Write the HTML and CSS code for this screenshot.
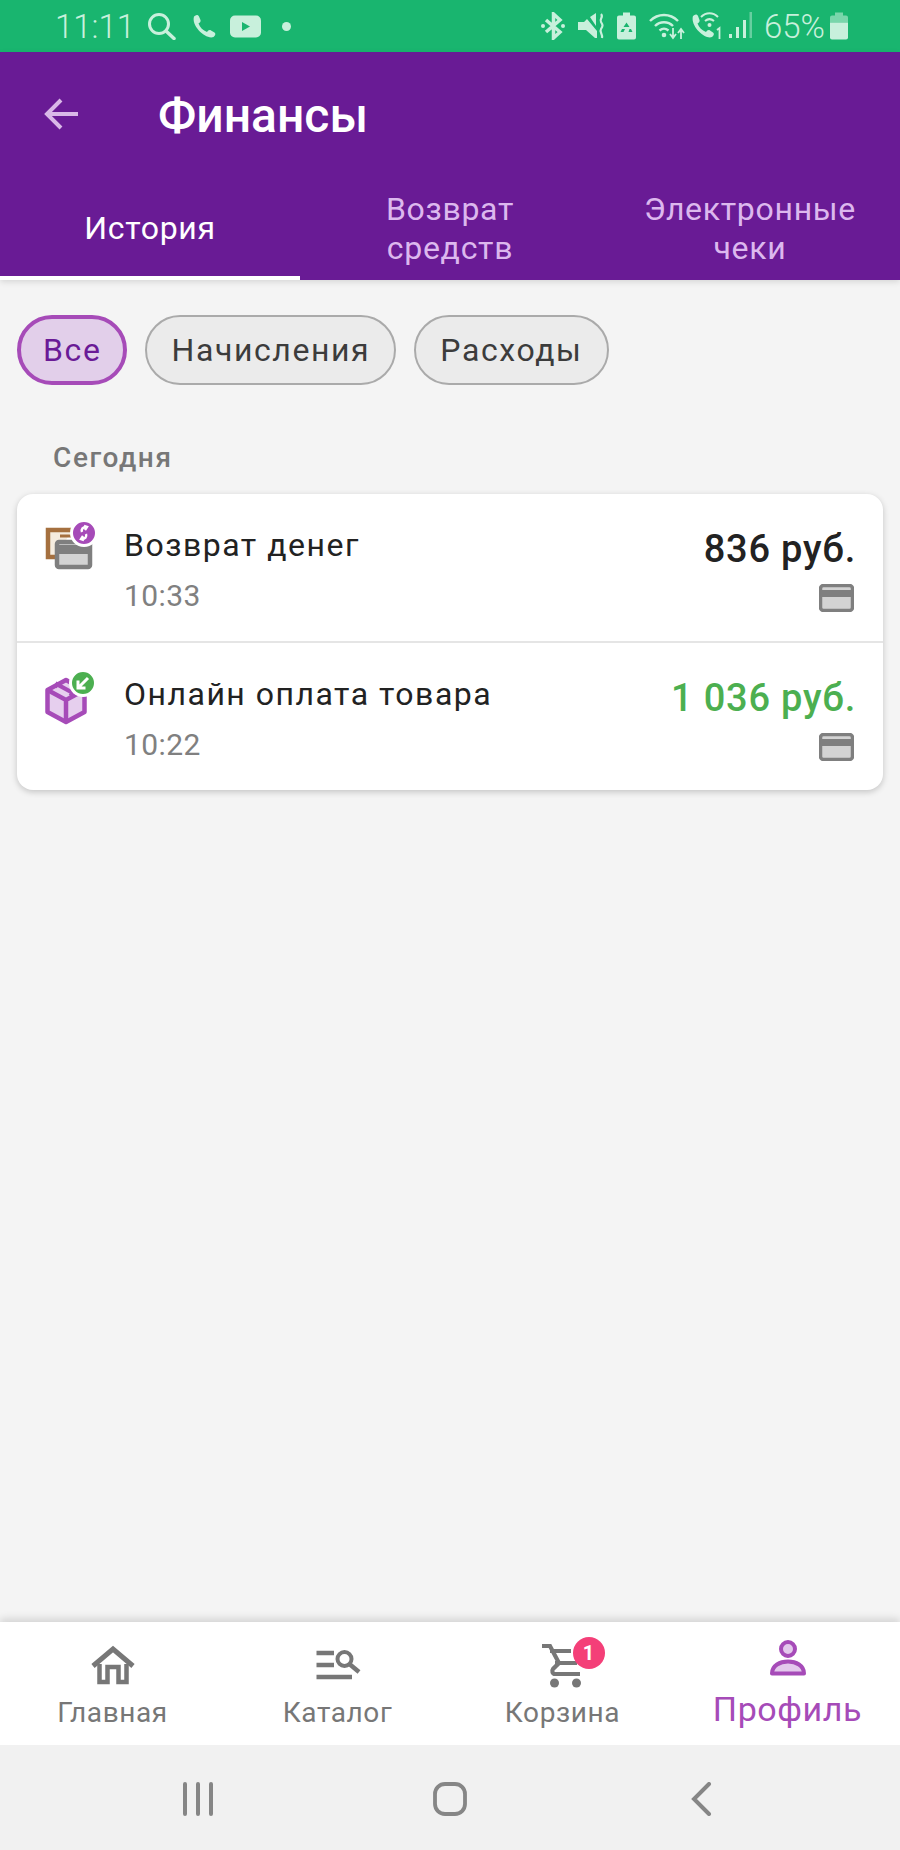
FILE: index.html
```html
<!DOCTYPE html>
<html lang="ru">
<head>
    <meta charset="UTF-8">
    <meta name="viewport" content="width=device-width, initial-scale=1.0">
    <title>Финансы</title>
    <link rel="stylesheet" href="styles.css">
</head>
<body>

<div class="app">
    <!-- Статус-бар -->
    <div class="status-bar">
        <span class="status-time">11:11</span>
        <svg class="st st-search" viewBox="0 0 30 28"><circle cx="12" cy="12" r="9.5" fill="none" stroke="#c8f0dc" stroke-width="3"/><path d="M19 19l8 7.500" stroke="#c8f0dc" stroke-width="3.500" stroke-linecap="round"/></svg>
        <svg class="st st-phone" viewBox="0 0 26 26"><path d="M3 3.500C5 1.500 7 1.500 8 3.500L9.500 7C10 8.500 9 9.500 7.500 10.500C9 14.500 12 17.500 16 19C17 17.500 18.500 16.500 20 17.500L23.500 19.500C25 20.500 24.500 22.500 22.500 24C15 27 0 13 3 3.500Z" fill="#c8f0dc"/></svg>
        <svg class="st st-yt" viewBox="0 0 31 23"><rect width="31" height="22" y="0.500" rx="5" fill="#c8f0dc"/><path d="M12 7l8 4.500-8 4.500z" fill="#19b56f"/></svg>
        <span class="status-dot"></span>
        <div class="status-spacer"></div>
        <svg class="st st-bt" viewBox="0 0 26 28"><path d="M6 8l14 12-6.500 6V2L20 8 6 20" fill="none" stroke="#c8f0dc" stroke-width="3.500"/><circle cx="3" cy="14" r="2" fill="#c8f0dc"/><circle cx="23" cy="14" r="2" fill="#c8f0dc"/></svg>
        <svg class="st st-mute" viewBox="0 0 27 28"><path d="M0 10h6l3-3 10 12v7h-2L8 18H0zM12 5l6-4v13z" fill="#c8f0dc"/><path d="M23 2c3 3-2 5 0 8s2 4 0 7 2 5 1 9" fill="none" stroke="#c8f0dc" stroke-width="2.200"/></svg>
        <svg class="st st-bsave" viewBox="0 0 19 27"><path d="M6 0h7v3h4a2 2 0 0 1 2 2v20a2 2 0 0 1-2 2H2a2 2 0 0 1-2-2V5a2 2 0 0 1 2-2h4z" fill="#c8f0dc"/><path d="M9.500 10l3 4.500h-6zM5 16.500h3l-1.500 3h-3zM14 16.500l1.500 3h-4l1-3z" fill="#19b56f"/></svg>
        <svg class="st st-wifi" viewBox="0 0 36 28"><g fill="none" stroke="#c8f0dc" stroke-width="2.400"><path d="M1 9c8-8 20-8 28 0"/><path d="M6 14c5-5 13-5 18 0"/><path d="M10.500 18.500c3-2.500 6-2.500 9 0"/></g><circle cx="15" cy="23" r="2.300" fill="#c8f0dc"/><path d="M24 16v9M21 22l3 4 3-4M32 27v-9M29 21l3-4 3 4" fill="none" stroke="#c8f0dc" stroke-width="1.800"/></svg>
        <svg class="st st-call" viewBox="0 0 30 28"><path d="M2 4c2-2 4-2 5 0l1.500 4c.5 1.500-.5 2.500-2 3.500 1.500 4 4.500 7 8.500 8.500 1-1.500 2.500-2.500 4-1.500l3 2c1.500 1 1 3-1 4.500C14 28-1 14 2 4z" fill="#c8f0dc"/><g fill="none" stroke="#c8f0dc" stroke-width="2"><path d="M10 5c5-5 12-5 17 0"/><path d="M14 9c3-2.500 6-2.500 9 0"/></g><circle cx="18.500" cy="13" r="2" fill="#c8f0dc"/><path d="M26 18l2.500-2v11" fill="none" stroke="#c8f0dc" stroke-width="1.800"/></svg>
        <svg class="st st-signal" viewBox="0 0 23 28"><g fill="#c8f0dc"><rect y="22" width="3" height="4"/><rect x="7" y="15" width="3" height="11"/><rect x="14" y="8" width="3" height="18"/></g><rect x="20.500" y="0" width="2.500" height="26" fill="#c8f0dc" opacity="0.450"/></svg>
        <span class="status-pct">65%</span>
        <svg class="st st-batt" viewBox="0 0 18 27"><path d="M5 0h8v3h3a2 2 0 0 1 2 2v5H0V5a2 2 0 0 1 2-2h3z" fill="#c8f0dc" opacity="0.550"/><path d="M0 10h18v15a2 2 0 0 1-2 2H2a2 2 0 0 1-2-2z" fill="#c8f0dc"/></svg>
    </div>

    <!-- Шапка с вкладками -->
    <header class="top">
        <div class="title-row">
            <svg class="back-icon" viewBox="0 0 36 36"><path d="M35 18H4M18 4L4 18l14 14" fill="none" stroke="#d9b8e8" stroke-width="4"/></svg>
            <h1 class="title">Финансы</h1>
        </div>
        <div class="tabs">
            <div class="tab tab-active">История</div>
            <div class="tab">Возврат средств</div>
            <div class="tab">Электронные чеки</div>
        </div>
    </header>

    <main class="content">
        <div class="chips">
            <span class="chip chip-active">Все</span>
            <span class="chip">Начисления</span>
            <span class="chip">Расходы</span>
        </div>

        <div class="day-label">Сегодня</div>

        <div class="card">
            <div class="row">
                <svg class="row-icon" viewBox="0 0 60 56">
                    <path d="M32 10H8v27h8" fill="#f5ecdf" stroke="#a5703f" stroke-width="4.500"/>
                    <path d="M20 16h13" stroke="#a5703f" stroke-width="3"/>
                    <rect x="17" y="22" width="33" height="25" rx="2" fill="#d3d3d3" stroke="#7f7f7f" stroke-width="4.500"/>
                    <rect x="17" y="25" width="33" height="9" fill="#7f7f7f"/>
                    <circle cx="44" cy="13" r="12.500" fill="#a64bb8" stroke="#fff" stroke-width="3"/>
                    <path d="M42 12c-1-3 1-5 4-5M44 6l3 1-2 3M46 14c1 3-1 5-4 5M44 20l-3-1 2-3" fill="none" stroke="#fff" stroke-width="2.400"/>
                </svg>
                <div class="row-main">
                    <div class="row-title">Возврат денег</div>
                    <div class="row-time">10:33</div>
                </div>
                <div class="row-side">
                    <div class="amount">836 руб.</div>
                    <svg class="pay-icon" viewBox="0 0 35 28"><rect x="1.500" y="1.500" width="32" height="25" rx="3" fill="#d3d3d3" stroke="#7f7f7f" stroke-width="3.500"/><rect x="1.500" y="6" width="32" height="7" fill="#7f7f7f"/></svg>
                </div>
            </div>
            <div class="row row-second">
                <svg class="row-icon" viewBox="0 0 60 56">
                    <path d="M26 11L44.500 21v22L26 53 7.500 43V21z" fill="#e6cfee" stroke="#a64bb8" stroke-width="4.500" stroke-linejoin="round"/>
                    <path d="M7.500 21L26 31l18.500-10M26 31v22" fill="none" stroke="#a64bb8" stroke-width="4.500"/>
                    <path d="M15 15l18 10" stroke="#a64bb8" stroke-width="6"/>
                    <path d="M17 19l12 6.500" stroke="#e6cfee" stroke-width="2.500"/>
                    <circle cx="43" cy="14" r="12.500" fill="#4caf50" stroke="#fff" stroke-width="3"/>
                    <path d="M48 9l-9 9M38 11.500V19h7.500" fill="none" stroke="#fff" stroke-width="3"/>
                </svg>
                <div class="row-main">
                    <div class="row-title">Онлайн оплата товара</div>
                    <div class="row-time">10:22</div>
                </div>
                <div class="row-side">
                    <div class="amount amount-plus">1 036 руб.</div>
                    <svg class="pay-icon" viewBox="0 0 35 28"><rect x="1.500" y="1.500" width="32" height="25" rx="3" fill="#d3d3d3" stroke="#7f7f7f" stroke-width="3.500"/><rect x="1.500" y="6" width="32" height="7" fill="#7f7f7f"/></svg>
                </div>
            </div>
        </div>
    </main>

    <!-- Нижнее меню -->
    <nav class="bottom-nav">
        <div class="nav-item">
            <svg class="nav-icon" viewBox="0 0 56 56"><path d="M8 32L28 15l20 17" fill="none" stroke="#777" stroke-width="5"/><path d="M14.500 30v18h8V33h11v15h8V30" fill="none" stroke="#777" stroke-width="4.500"/></svg>
            <span class="nav-label">Главная</span>
        </div>
        <div class="nav-item">
            <svg class="nav-icon" viewBox="0 0 56 56"><path d="M6.500 19H24M6.500 31H24M6.500 43H42" stroke="#777" stroke-width="4.500"/><circle cx="34.500" cy="25" r="7" fill="none" stroke="#777" stroke-width="4"/><path d="M40 30.500l9 7.500" stroke="#777" stroke-width="4.500"/></svg>
            <span class="nav-label">Каталог</span>
        </div>
        <div class="nav-item">
            <div class="cart-wrap">
                <svg class="nav-icon" viewBox="0 0 56 56"><path d="M7 12h8l9 17-6 6c-1.500 2-.5 5 2 5h25M15 17h21M20 29h22" fill="none" stroke="#777" stroke-width="4.200"/><circle cx="19.500" cy="49" r="4.500" fill="#777"/><circle cx="41.500" cy="49" r="4.500" fill="#777"/></svg>
                <span class="cart-badge">1</span>
            </div>
            <span class="nav-label">Корзина</span>
        </div>
        <div class="nav-item nav-item-active">
            <svg class="nav-icon" viewBox="0 0 56 56"><circle cx="28" cy="15" r="7" fill="#e3c8ec" stroke="#a64bb8" stroke-width="4"/><path d="M12 39.500c0-8 8-12 16-12s16 4 16 12z" fill="#e3c8ec" stroke="#a64bb8" stroke-width="4" stroke-linejoin="round"/></svg>
            <span class="nav-label">Профиль</span>
        </div>
    </nav>

    <!-- Системные кнопки -->
    <div class="sys-nav">
        <svg class="sys-icon" viewBox="0 0 34 34"><path d="M4 2v30M17 2v30M30 2v30" stroke="#868686" stroke-width="4" stroke-linecap="round"/></svg>
        <svg class="sys-icon" viewBox="0 0 34 34"><rect x="2" y="2" width="30" height="30" rx="10" fill="none" stroke="#868686" stroke-width="3.800"/></svg>
        <svg class="sys-icon" viewBox="0 0 34 34"><path d="M24 2L9 17l15 15" fill="none" stroke="#868686" stroke-width="4" stroke-linecap="round"/></svg>
    </div>
</div>

</body>
</html>
```

FILE: styles.css
```css
/* Базовые стили */
* {
    box-sizing: border-box;
}
body {
    margin: 0;
    font-family: Roboto, "Noto Sans", sans-serif;
    background-color: #f4f4f4;
}
.app {
    display: flex;
    flex-direction: column;
    width: 900px;
    height: 1850px;
    overflow: hidden;
}

/* Статус-бар */
.status-bar {
    display: flex;
    align-items: center;
    flex: none;
    height: 52px;
    padding: 0 52px 0 55px;
    color: #c8f0dc;
    background-color: #19b56f;
}
.status-time, .status-pct {
    font-size: 33px;
    font-weight: 300;
}
.status-spacer {
    flex: 1;
}
.st {
    flex: none;
    height: 28px;
}
.st-search { width: 30px; margin-left: 12px; }
.st-phone { width: 26px; margin-left: 14px; }
.st-yt { width: 31px; height: 23px; margin-left: 13px; }
.status-dot {
    width: 9px;
    height: 9px;
    margin-left: 21px;
    border-radius: 50%;
    background-color: #c8f0dc;
}
.st-bt { width: 26px; }
.st-mute { width: 27px; margin-left: 12px; }
.st-bsave { width: 19px; margin-left: 12px; }
.st-wifi { width: 36px; margin-left: 13px; }
.st-call { width: 30px; margin-left: 6px; }
.st-signal { width: 23px; margin-left: 8px; }
.status-pct { margin-left: 12px; }
.st-batt { width: 18px; margin-left: 5px; }

/* Шапка */
.top {
    flex: none;
    height: 228px;
    background-color: #691b95;
    box-shadow: 0 2px 6px rgba(0, 0, 0, 0.12);
}
.title-row {
    display: flex;
    align-items: center;
    height: 122px;
    padding-left: 43px;
}
.back-icon {
    width: 36px;
    height: 36px;
    margin-top: 2px;
}
.title {
    margin: 4px 0 0 79px;
    font-size: 48px;
    font-weight: 500;
    color: #fff;
}
.tabs {
    display: grid;
    grid-template-columns: repeat(3, 1fr);
    height: 106px;
}
.tab {
    display: flex;
    align-items: center;
    justify-content: center;
    padding: 4px 40px 0;
    font-size: 32px;
    line-height: 39px;
    letter-spacing: 0.7px;
    text-align: center;
    color: #dcb8ee;
}
.tab-active {
    padding: 10px 40px 4px;
    color: #fff;
    border-bottom: 4px solid #fff;
}

/* Основное содержимое */
.content {
    flex: 1;
    padding: 35px 17px 0;
}
.chips {
    display: flex;
    gap: 18px;
}
.chip {
    height: 70px;
    padding: 0 24px;
    font-size: 32px;
    line-height: 66px;
    letter-spacing: 1.6px;
    color: #3c3c3c;
    background-color: #ebebeb;
    border: 2px solid #aaa;
    border-radius: 35px;
}
.chip-active {
    padding: 0 22px;
    line-height: 62px;
    color: #6a1b96;
    background-color: #e2cfea;
    border: 4px solid #a64bb8;
}
.day-label {
    margin: 55px 0 18px 36px;
    font-size: 28px;
    font-weight: 500;
    line-height: 36px;
    letter-spacing: 1.6px;
    color: #777;
}
.card {
    background-color: #fff;
    border-radius: 16px;
    box-shadow: 0 2px 6px rgba(0, 0, 0, 0.2);
}
.row {
    display: flex;
    height: 147px;
    padding: 26px 27px 0 23px;
}
.row-second {
    height: 149px;
    padding-top: 26px;
    border-top: 2px solid #e5e5e5;
}
.row-icon {
    flex: none;
    width: 60px;
    height: 56px;
}
.row-main {
    flex: 1;
    padding: 7px 0 0 24px;
}
.row-title {
    font-size: 32px;
    line-height: 36px;
    letter-spacing: 1.5px;
    color: #222;
}
.row-time {
    margin-top: 15px;
    font-size: 30px;
    line-height: 36px;
    letter-spacing: 0.4px;
    color: #808080;
}
.row-side {
    display: flex;
    flex-direction: column;
    align-items: flex-end;
}
.amount {
    margin-top: 8px;
    font-size: 38px;
    font-weight: 500;
    line-height: 42px;
    letter-spacing: 0.8px;
    color: #222;
}
.amount-plus {
    color: #4caf50;
}
.pay-icon {
    width: 35px;
    height: 28px;
    margin: 14px 2px 0 0;
}

/* Нижнее меню */
.bottom-nav {
    display: grid;
    grid-template-columns: repeat(4, 1fr);
    flex: none;
    height: 123px;
    background-color: #fff;
    box-shadow: 0 -3px 8px rgba(0, 0, 0, 0.14);
}
.nav-item {
    display: flex;
    flex-direction: column;
    align-items: center;
    padding-top: 12px;
}
.nav-icon {
    display: block;
    width: 56px;
    height: 56px;
}
.nav-label {
    margin-top: 5px;
    font-size: 28px;
    line-height: 36px;
    letter-spacing: 0.6px;
    color: #777;
}
.nav-item-active .nav-label {
    margin-top: 1px;
    font-size: 34px;
    color: #a64bb8;
}
.cart-wrap {
    position: relative;
}
.cart-badge {
    position: absolute;
    top: 3px;
    left: 38px;
    width: 32px;
    height: 32px;
    font-size: 20px;
    font-weight: 700;
    line-height: 32px;
    text-align: center;
    color: #fff;
    background-color: #f43f78;
    border-radius: 50%;
}

/* Системные кнопки */
.sys-nav {
    display: grid;
    grid-template-columns: repeat(3, 252px);
    justify-content: center;
    justify-items: center;
    align-items: center;
    flex: none;
    height: 105px;
    padding-top: 2px;
    background-color: #f1f1f1;
}
.sys-icon {
    width: 34px;
    height: 34px;
}
```
